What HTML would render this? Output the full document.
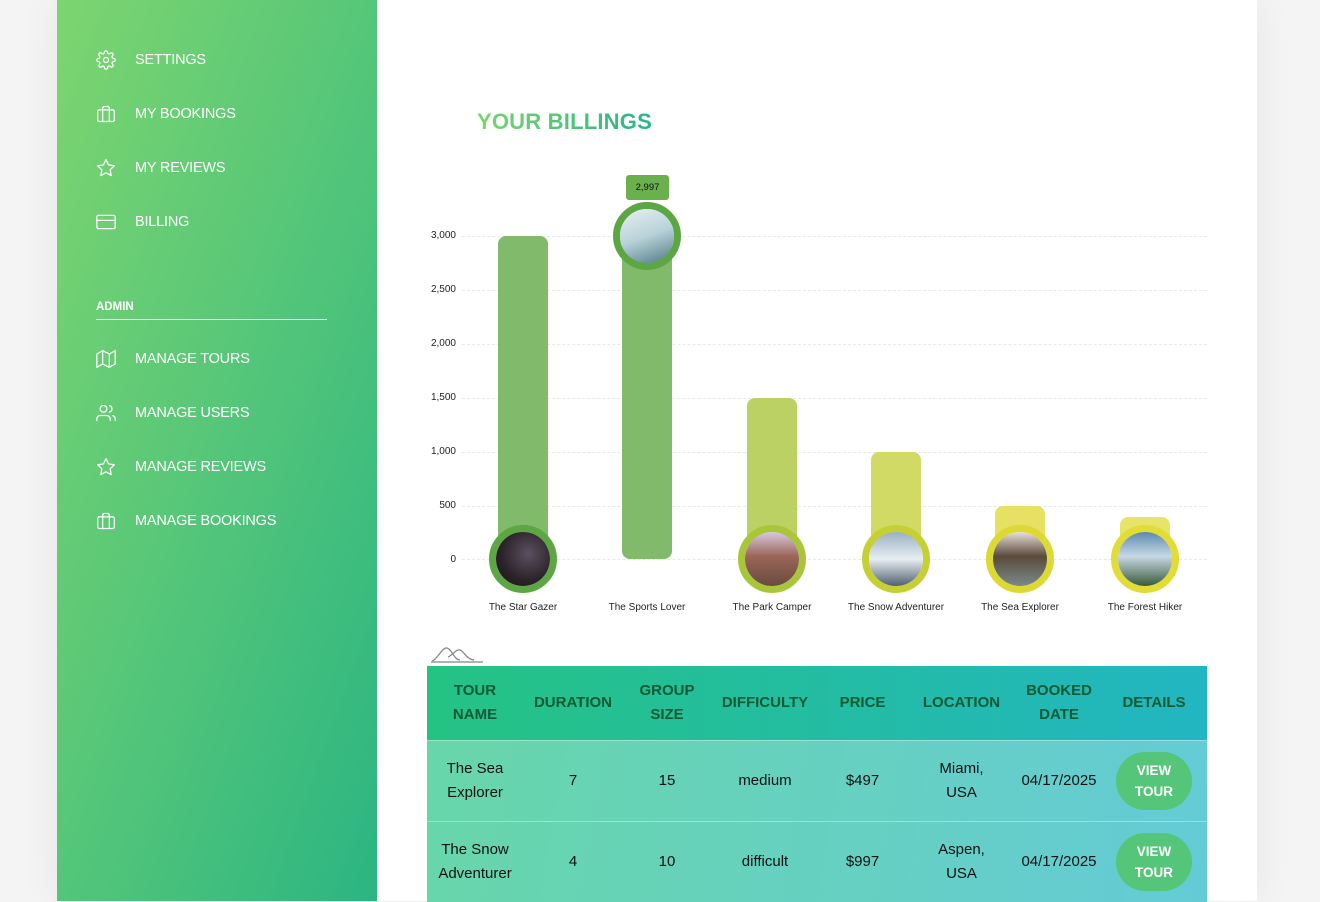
<!DOCTYPE html>
<html><head><meta charset="utf-8"><style>
*{margin:0;padding:0;box-sizing:border-box}
body{width:1320px;height:901px;overflow:hidden;background:#f4f4f4;font-family:"Liberation Sans",sans-serif;position:relative}
.card{position:absolute;left:57px;top:0;width:1200px;height:901px;background:#fff;box-shadow:0 0 40px rgba(0,0,0,.06)}
.side{position:absolute;left:57px;top:0;width:320px;height:901px;background:linear-gradient(110deg,#7dd56f 0%,#55c679 50%,#2bb582 100%)}
.item{position:absolute;left:39px;color:#fff;font-size:14.5px;letter-spacing:-.2px;display:flex;align-items:center}
.item svg{width:20px;height:20px;margin-right:19px;fill:none;stroke:#fff;stroke-width:1.5;stroke-linecap:round;stroke-linejoin:round}
.admin{position:absolute;left:39px;top:301px;color:#fff;font-size:11.5px;font-weight:bold;width:231px;border-bottom:1px solid #fff;padding-bottom:6px}
h2{position:absolute;left:477px;top:109px;font-size:22px;font-weight:bold;background:linear-gradient(90deg,#7dd56f,#28b487);-webkit-background-clip:text;color:transparent;letter-spacing:.2px}
.grid{position:absolute;left:462px;width:745px;border-top:1px dashed #e8e8e8}
.yl{position:absolute;width:40px;text-align:right;left:416px;font-size:10px;color:#222}
.bar{position:absolute;width:50px;border-radius:8px}
.circ{position:absolute;width:68px;height:68px;border-radius:50%;border:7px solid}
.circ i{display:block;width:100%;height:100%;border-radius:50%}
.xl{position:absolute;top:602px;width:140px;text-align:center;font-size:10px;color:#222}
table{position:absolute;left:427px;top:666px;width:780px;border-collapse:collapse;table-layout:fixed;background:linear-gradient(100deg,#68d6a9,#64cbd6)}
thead tr{background:linear-gradient(90deg,#24c383,#22b6c2)}
th{height:74px;color:#0f5a32;font-size:15px;font-weight:bold;line-height:24px;text-align:center}
td{height:81px;font-size:15px;color:#111;text-align:center;line-height:24px;border-top:1px solid rgba(255,255,255,.35)}
.btn{display:inline-block;width:76px;height:58px;border-radius:29px;background:#55c57a;color:#fff;font-weight:bold;font-size:13.5px;line-height:21px;padding-top:8px}
</style></head><body>
<div class="card"></div>
<div class="side">
<div class="item" style="top:50px"><svg viewBox="0 0 24 24"><circle cx="12" cy="12" r="3"/><path d="M19.4 15a1.7 1.7 0 0 0 .3 1.8l.1.1a2 2 0 1 1-2.8 2.8l-.1-.1a1.7 1.7 0 0 0-1.8-.3 1.7 1.7 0 0 0-1 1.5V21a2 2 0 1 1-4 0v-.1a1.7 1.7 0 0 0-1.1-1.5 1.7 1.7 0 0 0-1.800.3l-.1.1a2 2 0 1 1-2.8-2.8l.1-.1a1.7 1.7 0 0 0 .3-1.8 1.7 1.7 0 0 0-1.5-1H3a2 2 0 1 1 0-4h.1a1.7 1.7 0 0 0 1.5-1.1 1.7 1.7 0 0 0-.3-1.8l-.1-.1a2 2 0 1 1 2.8-2.8l.1.1a1.7 1.7 0 0 0 1.8.3H9a1.7 1.7 0 0 0 1-1.5V3a2 2 0 1 1 4 0v.1a1.7 1.7 0 0 0 1 1.5 1.7 1.7 0 0 0 1.8-.3l.1-.1a2 2 0 1 1 2.8 2.8l-.1.1a1.7 1.7 0 0 0-.3 1.8V9a1.7 1.7 0 0 0 1.5 1H21a2 2 0 1 1 0 4h-.1a1.7 1.7 0 0 0-1.5 1z"/></svg>SETTINGS</div>
<div class="item" style="top:104px"><svg viewBox="0 0 24 24"><rect x="2" y="7" width="20" height="14" rx="2"/><path d="M16 21V5a2 2 0 0 0-2-2h-4a2 2 0 0 0-2 2v16"/></svg>MY BOOKINGS</div>
<div class="item" style="top:158px"><svg viewBox="0 0 24 24"><path d="M12 2l3.1 6.3 6.9 1-5 4.9 1.2 6.9L12 17.8l-6.2 3.3L7 14.2 2 9.3l6.9-1z"/></svg>MY REVIEWS</div>
<div class="item" style="top:212px"><svg viewBox="0 0 24 24"><rect x="1" y="4" width="22" height="16" rx="2"/><path d="M1 10h22"/></svg>BILLING</div>
<div class="admin">ADMIN</div>
<div class="item" style="top:349px"><svg viewBox="0 0 24 24"><path d="M1 6v16l7-4 8 4 7-4V2l-7 4-8-4-7 4zM8 2v16M16 6v16"/></svg>MANAGE TOURS</div>
<div class="item" style="top:403px"><svg viewBox="0 0 24 24"><path d="M17 21v-2a4 4 0 0 0-4-4H5a4 4 0 0 0-4 4v2"/><circle cx="9" cy="7" r="4"/><path d="M23 21v-2a4 4 0 0 0-3-3.9M16 3.1a4 4 0 0 1 0 7.8"/></svg>MANAGE USERS</div>
<div class="item" style="top:457px"><svg viewBox="0 0 24 24"><path d="M12 2l3.1 6.3 6.9 1-5 4.9 1.2 6.9L12 17.8l-6.2 3.3L7 14.2 2 9.3l6.9-1z"/></svg>MANAGE REVIEWS</div>
<div class="item" style="top:511px"><svg viewBox="0 0 24 24"><rect x="2" y="7" width="20" height="14" rx="2"/><path d="M16 21V5a2 2 0 0 0-2-2h-4a2 2 0 0 0-2 2v16"/></svg>MANAGE BOOKINGS</div>
</div>
<h2>YOUR BILLINGS</h2>
<div class="grid" style="top:236px"></div><div class="grid" style="top:290px"></div><div class="grid" style="top:344px"></div><div class="grid" style="top:398px"></div><div class="grid" style="top:452px"></div><div class="grid" style="top:506px"></div><div class="grid" style="top:559px"></div>
<div class="yl" style="top:230px">3,000</div><div class="yl" style="top:284px">2,500</div><div class="yl" style="top:338px">2,000</div><div class="yl" style="top:392px">1,500</div><div class="yl" style="top:446px">1,000</div><div class="yl" style="top:500px">500</div><div class="yl" style="top:554px">0</div>
<div class="bar" style="left:498px;top:236px;height:310px;background:#80ba6a"></div>
<div class="bar" style="left:622px;top:240px;height:319px;background:#80ba6a"></div>
<div class="bar" style="left:747px;top:398px;height:150px;background:#bcd163"></div>
<div class="bar" style="left:871px;top:452px;height:100px;background:#d1da64"></div>
<div class="bar" style="left:995px;top:506px;height:50px;background:#e6e063"></div>
<div class="bar" style="left:1120px;top:517px;height:40px;background:#e8e46a"></div>
<div class="circ" style="left:489px;top:525px;border-color:#5ca744"><i style="background:radial-gradient(circle at 60% 40%,#5a5060,#2a2228 60%,#1a1410)"></i></div>
<div class="circ" style="left:613px;top:202px;border-color:#5ca744"><i style="background:linear-gradient(160deg,#e8f0f2,#b8d2d8 50%,#507a86)"></i></div>
<div class="circ" style="left:738px;top:525px;border-color:#a9c53a"><i style="background:linear-gradient(180deg,#d8c8e0,#9a6658 45%,#6a4a40)"></i></div>
<div class="circ" style="left:862px;top:525px;border-color:#c6cf34"><i style="background:linear-gradient(180deg,#9ab0c4,#e8eef2 50%,#506070)"></i></div>
<div class="circ" style="left:986px;top:525px;border-color:#dcd935"><i style="background:linear-gradient(180deg,#e8e0d8,#5a4a3a 45%,#7a8a8a)"></i></div>
<div class="circ" style="left:1111px;top:525px;border-color:#e2dc36"><i style="background:linear-gradient(180deg,#5a8ab0,#c8d8e4 45%,#3a5a3a)"></i></div>
<div style="position:absolute;left:626px;top:175px;width:43px;height:25px;background:#6ab04c;border-radius:3px;font-size:9.5px;color:#111;text-align:center;line-height:25px">2,997</div>
<div class="xl" style="left:453px">The Star Gazer</div><div class="xl" style="left:577px">The Sports Lover</div><div class="xl" style="left:702px">The Park Camper</div><div class="xl" style="left:826px">The Snow Adventurer</div><div class="xl" style="left:950px">The Sea Explorer</div><div class="xl" style="left:1075px">The Forest Hiker</div>
<svg style="position:absolute;left:430px;top:645px" width="54" height="18" viewBox="0 0 54 18"><path d="M2 16C8 14 12 2 17 3S24 15 30 15M18 12c5-2 8-8 12-7s6 9 14 10" fill="none" stroke="#888" stroke-width="1.3"/><path d="M1 17h52" stroke="#999" stroke-width="1.5"/></svg>
<table><colgroup><col style="width:96px"><col style="width:100px"><col style="width:88px"><col style="width:108px"><col style="width:87px"><col style="width:111px"><col style="width:84px"><col style="width:106px"></colgroup>
<thead><tr><th>TOUR<br>NAME</th><th>DURATION</th><th>GROUP<br>SIZE</th><th>DIFFICULTY</th><th>PRICE</th><th>LOCATION</th><th>BOOKED<br>DATE</th><th>DETAILS</th></tr></thead>
<tbody><tr><td>The Sea<br>Explorer</td><td>7</td><td>15</td><td>medium</td><td>$497</td><td>Miami,<br>USA</td><td>04/17/2025</td><td><span class="btn">VIEW<br>TOUR</span></td></tr>
<tr><td>The Snow<br>Adventurer</td><td>4</td><td>10</td><td>difficult</td><td>$997</td><td>Aspen,<br>USA</td><td>04/17/2025</td><td><span class="btn">VIEW<br>TOUR</span></td></tr></tbody></table>
</body></html>
